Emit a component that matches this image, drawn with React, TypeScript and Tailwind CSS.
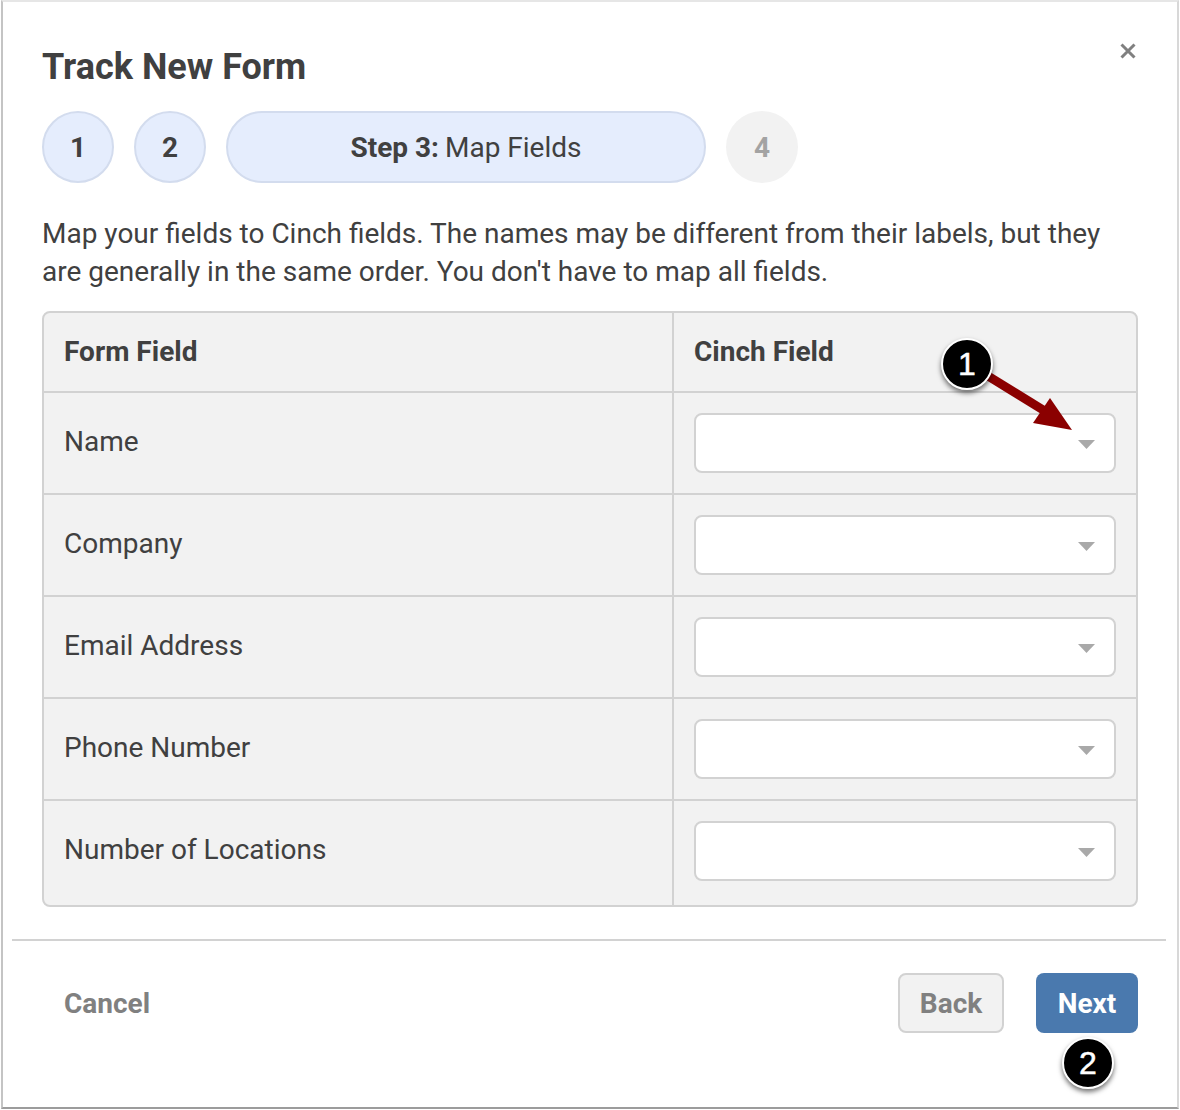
const fields = ["Name", "Company", "Email Address", "Phone Number", "Number of Locations"];

function Select() {
  return (
    <div className="flex h-[60px] w-[422px] items-center justify-end rounded-[8px] border-2 border-[#d2d2d2] bg-white pr-[19px]">
      <svg width="17" height="10" viewBox="0 0 17 10" className="mt-[3px]">
        <polygon points="0,0 17,0 8.5,9" fill="#a9a9a9" />
      </svg>
    </div>
  );
}

function Step({ n, muted }: { n: string; muted?: boolean }) {
  return (
    <div
      className={
        muted
          ? "flex size-[72px] items-center justify-center rounded-full bg-[#f2f2f2] pt-[2px] text-[28px] font-bold text-[#a3a3a3]"
          : "flex size-[72px] items-center justify-center rounded-full border-2 border-[#d3dcee] bg-[#e5edfd] pt-[2px] text-[28px] font-bold text-[#404040]"
      }
    >
      {n}
    </div>
  );
}

function Badge({ n }: { n: string }) {
  return (
    <div className="flex size-[52px] items-center justify-center rounded-full border-2 border-white bg-black text-[32px] text-white shadow-[0_3px_5px_rgba(0,0,0,0.55)] [-webkit-text-stroke:0.5px_white] [font-family:'Liberation_Sans',sans-serif]">
      {n}
    </div>
  );
}

export default function App() {
  return (
    <div className="relative h-[1110px] w-[1180px] overflow-hidden bg-white text-[#404040] [font-family:Roboto,sans-serif]">
      <div className="ml-[1px] flex h-[1109px] w-[1178px] flex-col border-x-2 border-t-2 border-b-2 border-t-[#e6e6e6] border-r-[#d8d8d8] border-b-[#9c9c9c] border-l-[#c4c4c4]">
        <div className="flex flex-col px-[39px]">
          <div className="flex items-start justify-between pt-[43px]">
            <h1 className="text-[36px] leading-[44px] font-bold">Track New Form</h1>
            <svg width="16" height="16" viewBox="0 0 16 16" className="mt-[-2px] mr-[2px]">
              <path d="M1.5 1.5 L14.5 14.5 M14.5 1.5 L1.5 14.5" stroke="#808080" strokeWidth="3" />
            </svg>
          </div>
          <div className="mt-[22px] flex gap-[20px]">
            <Step n="1" />
            <Step n="2" />
            <div className="flex h-[72px] w-[480px] items-center justify-center rounded-full border-2 border-[#d3dcee] bg-[#e5edfd] pt-[2px] text-[28px]">
              <b className="mr-[6px]">Step 3:</b> Map Fields
            </div>
            <Step n="4" muted />
          </div>
          <p className="mt-[32px] text-[28px] leading-[38px]">
            Map your fields to Cinch fields. The names may be different from their labels, but they
            <br />
            are generally in the same order. You don't have to map all fields.
          </p>
          <div className="mt-[20px] w-[1096px] rounded-[8px] border-2 border-[#d2d2d2] bg-[#f2f2f2] text-[28px]">
            <div className="flex h-[80px] items-center border-b-2 border-[#d2d2d2] font-bold">
              <div className="flex h-full w-[630px] items-center border-r-2 border-[#d2d2d2] pl-[20px]">Form Field</div>
              <div className="pl-[20px]">Cinch Field</div>
            </div>
            {fields.map((f, i) => (
              <div
                key={f}
                className={
                  i < 4
                    ? "flex h-[102px] items-stretch border-b-2 border-[#d2d2d2]"
                    : "flex h-[104px] items-stretch"
                }
              >
                <div className="flex w-[630px] items-center border-r-2 border-[#d2d2d2] pb-[2px] pl-[20px]">
                  <span className={i < 4 ? "" : "mb-[4px]"}>{f}</span>
                </div>
                <div className="pt-[20px] pl-[20px]">
                  <Select />
                </div>
              </div>
            ))}
          </div>
        </div>
        <div className="mt-[32px] mr-[11px] ml-[9px] h-[2px] bg-[#d2d2d2]" />
        <div className="mt-[32px] flex items-center px-[39px] font-bold">
          <span className="ml-[22px] pt-[2px] text-[28px] text-[#808080]">Cancel</span>
          <div className="ml-auto flex gap-[32px] text-[28px]">
            <div className="flex h-[60px] w-[106px] items-center justify-center rounded-[8px] border-2 border-[#d2d2d2] bg-[#f2f2f2] pt-[2px] text-[#808080]">
              Back
            </div>
            <div className="flex h-[60px] w-[102px] items-center justify-center rounded-[8px] bg-[#4a79ae] pt-[2px] text-white">
              Next
            </div>
          </div>
        </div>
      </div>

      <svg className="absolute top-[370px] left-[980px]" width="100" height="65" viewBox="0 0 100 65">
        <line x1="8" y1="6" x2="68" y2="43" stroke="#8b0000" strokeWidth="9" />
        <polygon points="92,60 53,53 70,28" fill="#8b0000" />
      </svg>
      <div className="absolute top-[338px] left-[941px]">
        <Badge n="1" />
      </div>
      <div className="absolute top-[1037px] left-[1062px]">
        <Badge n="2" />
      </div>
    </div>
  );
}
